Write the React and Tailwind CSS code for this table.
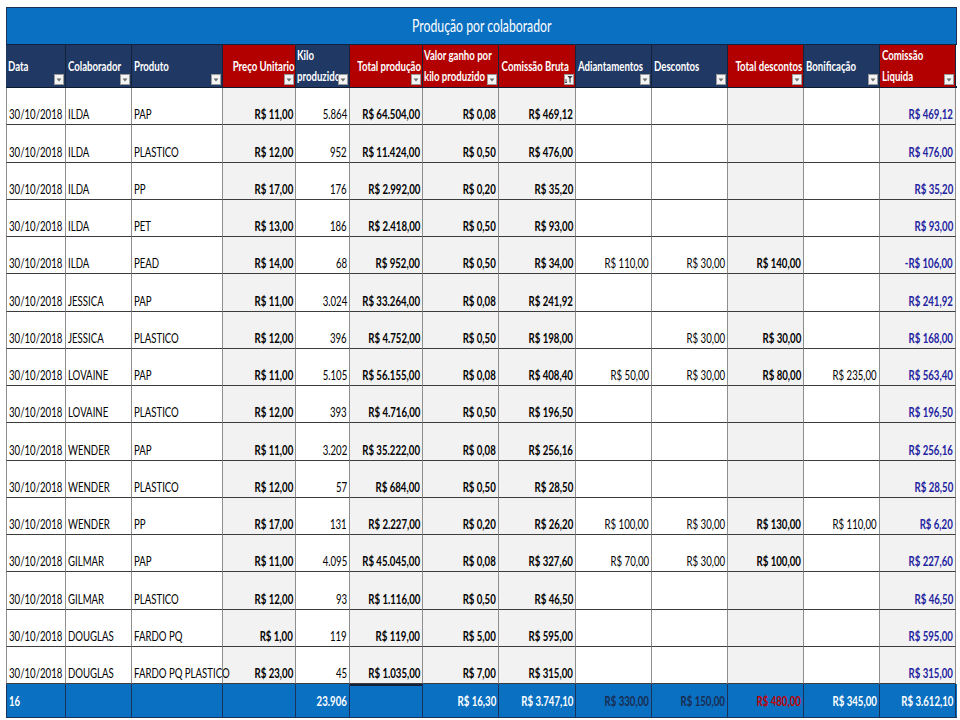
import React from "react";

const rows = [
  ["30/10/2018","ILDA","PAP","R$ 11,00","5.864","R$ 64.504,00","R$ 0,08","R$ 469,12","","","","","R$ 469,12"],
  ["30/10/2018","ILDA","PLASTICO","R$ 12,00","952","R$ 11.424,00","R$ 0,50","R$ 476,00","","","","","R$ 476,00"],
  ["30/10/2018","ILDA","PP","R$ 17,00","176","R$ 2.992,00","R$ 0,20","R$ 35,20","","","","","R$ 35,20"],
  ["30/10/2018","ILDA","PET","R$ 13,00","186","R$ 2.418,00","R$ 0,50","R$ 93,00","","","","","R$ 93,00"],
  ["30/10/2018","ILDA","PEAD","R$ 14,00","68","R$ 952,00","R$ 0,50","R$ 34,00","R$ 110,00","R$ 30,00","R$ 140,00","","-R$ 106,00"],
  ["30/10/2018","JESSICA","PAP","R$ 11,00","3.024","R$ 33.264,00","R$ 0,08","R$ 241,92","","","","","R$ 241,92"],
  ["30/10/2018","JESSICA","PLASTICO","R$ 12,00","396","R$ 4.752,00","R$ 0,50","R$ 198,00","","R$ 30,00","R$ 30,00","","R$ 168,00"],
  ["30/10/2018","LOVAINE","PAP","R$ 11,00","5.105","R$ 56.155,00","R$ 0,08","R$ 408,40","R$ 50,00","R$ 30,00","R$ 80,00","R$ 235,00","R$ 563,40"],
  ["30/10/2018","LOVAINE","PLASTICO","R$ 12,00","393","R$ 4.716,00","R$ 0,50","R$ 196,50","","","","","R$ 196,50"],
  ["30/10/2018","WENDER","PAP","R$ 11,00","3.202","R$ 35.222,00","R$ 0,08","R$ 256,16","","","","","R$ 256,16"],
  ["30/10/2018","WENDER","PLASTICO","R$ 12,00","57","R$ 684,00","R$ 0,50","R$ 28,50","","","","","R$ 28,50"],
  ["30/10/2018","WENDER","PP","R$ 17,00","131","R$ 2.227,00","R$ 0,20","R$ 26,20","R$ 100,00","R$ 30,00","R$ 130,00","R$ 110,00","R$ 6,20"],
  ["30/10/2018","GILMAR","PAP","R$ 11,00","4.095","R$ 45.045,00","R$ 0,08","R$ 327,60","R$ 70,00","R$ 30,00","R$ 100,00","","R$ 227,60"],
  ["30/10/2018","GILMAR","PLASTICO","R$ 12,00","93","R$ 1.116,00","R$ 0,50","R$ 46,50","","","","","R$ 46,50"],
  ["30/10/2018","DOUGLAS","FARDO PQ","R$ 1,00","119","R$ 119,00","R$ 5,00","R$ 595,00","","","","","R$ 595,00"],
  ["30/10/2018","DOUGLAS","FARDO PQ PLASTICO","R$ 23,00","45","R$ 1.035,00","R$ 7,00","R$ 315,00","","","","","R$ 315,00"],
];

const L = "justify-start pl-[2px]";
const R = "justify-end pr-[2px]";
const W = "bg-white";
const G = "bg-[#f2f2f2]";

const bodyCols = [
  { a: L, bg: W, t: "font-normal text-black", o: "origin-left" },
  { a: L, bg: W, t: "font-normal text-black", o: "origin-left" },
  { a: L, bg: W, t: "font-normal text-black", o: "origin-left" },
  { a: R, bg: G, t: "font-bold text-black", o: "origin-right" },
  { a: R, bg: W, t: "font-normal text-black", o: "origin-right" },
  { a: R, bg: G, t: "font-bold text-black", o: "origin-right" },
  { a: R, bg: G, t: "font-bold text-black", o: "origin-right" },
  { a: R, bg: G, t: "font-bold text-black", o: "origin-right" },
  { a: R, bg: W, t: "font-normal text-black", o: "origin-right" },
  { a: R, bg: W, t: "font-normal text-black", o: "origin-right" },
  { a: R, bg: G, t: "font-bold text-black", o: "origin-right" },
  { a: R, bg: W, t: "font-normal text-black", o: "origin-right" },
  { a: R, bg: G, t: "font-bold text-[#2323a0]", o: "origin-right" },
];

const NAVY = "bg-[#203864]";
const RED = "bg-[#b20000]";

const headers = [
  { lines: ["Data"], bg: NAVY, a: "justify-start pl-[2px]", o: "origin-left" },
  { lines: ["Colaborador"], bg: NAVY, a: "justify-start pl-[2px]", o: "origin-left" },
  { lines: ["Produto"], bg: NAVY, a: "justify-start pl-[2px]", o: "origin-left" },
  { lines: ["Preço Unitario"], bg: RED, a: "justify-end pr-[1px]", o: "origin-right" },
  { lines: ["Kilo", "produzido"], bg: NAVY, a: "justify-start pl-[1px]", o: "origin-left" },
  { lines: ["Total produção"], bg: RED, a: "justify-end pr-[1px]", o: "origin-right" },
  { lines: ["Valor ganho por", "kilo produzido"], bg: RED, a: "justify-start pl-[1px]", o: "origin-left" },
  { lines: ["Comissão Bruta"], bg: RED, a: "justify-end pr-[6px]", o: "origin-right", filtered: true },
  { lines: ["Adiantamentos"], bg: NAVY, a: "justify-start pl-[2px]", o: "origin-left" },
  { lines: ["Descontos"], bg: NAVY, a: "justify-start pl-[2px]", o: "origin-left" },
  { lines: ["Total descontos"], bg: RED, a: "justify-end pr-[1px]", o: "origin-right" },
  { lines: ["Bonificação"], bg: NAVY, a: "justify-start pl-[2px]", o: "origin-left" },
  { lines: ["Comissão", "Liquida"], bg: RED, a: "justify-start pl-[2px]", o: "origin-left" },
];

const footer = [
  { v: "16", a: L, o: "origin-left", c: "text-white" },
  { v: "", a: R, o: "origin-right", c: "text-white" },
  { v: "", a: R, o: "origin-right", c: "text-white" },
  { v: "", a: R, o: "origin-right", c: "text-white" },
  { v: "23.906", a: R, o: "origin-right", c: "text-white" },
  { v: "", a: R, o: "origin-right", c: "text-white", top: true },
  { v: "R$ 16,30", a: R, o: "origin-right", c: "text-white" },
  { v: "R$ 3.747,10", a: R, o: "origin-right", c: "text-white" },
  { v: "R$ 330,00", a: R, o: "origin-right", c: "text-[#1a2c50]" },
  { v: "R$ 150,00", a: R, o: "origin-right", c: "text-[#1a2c50]" },
  { v: "R$ 480,00", a: R, o: "origin-right", c: "text-[#c00000]" },
  { v: "R$ 345,00", a: R, o: "origin-right", c: "text-white" },
  { v: "R$ 3.612,10", a: R, o: "origin-right", c: "text-white" },
];

const GRID = "grid grid-cols-[60px_66px_91px_73px_54px_73px_76px_77px_76px_76px_76px_76px_76px]";

function FilterBtn({ filtered }) {
  return (
    <div className="absolute bottom-[2px] right-[1px] w-[10px] h-[11px] bg-[#f4f4f4] border border-[#9a9a9a] flex items-center justify-center">
      {filtered ? (
        <svg width="8" height="9" viewBox="0 0 8 9">
          <path d="M2.5 1 H7.5 L5.6 3.6 V8 L4.4 7.2 V3.6 Z" fill="#404040" />
          <path d="M1 4 V8 M0 6.8 L1 8 L2 6.8" stroke="#404040" strokeWidth="0.9" fill="none" />
        </svg>
      ) : (
        <svg width="6" height="4" viewBox="0 0 6 4">
          <path d="M0.5 0.5 H5.5 L3 3.5 Z" fill="#6a6a6a" />
        </svg>
      )}
    </div>
  );
}

export default function App() {
  return (
    <div className="min-h-screen w-[960px] h-[720px] bg-white pt-[7px] pl-[6px] font-[Lato,sans-serif] overflow-hidden">
      <div className="w-[951px]">
        {/* Title */}
        <div className="h-[37px] bg-[#0a70c2] border-t border-l border-r border-[#1b3157] flex items-center justify-center">
          <span className="inline-block whitespace-nowrap text-[17px] text-white scale-x-[0.72] origin-center leading-5">
            Produção por colaborador
          </span>
        </div>

        {/* Header */}
        <div className={`${GRID} h-[44px] border-t border-[#13223d] border-b-2 border-b-[#0e1a30]`}>
          {headers.map((h, i) => (
            <div
              key={i}
              className={`relative ${h.bg} border-r border-[#16223a] flex ${h.a} ${h.lines.length > 1 ? "flex-col justify-center items-start" : "items-center"}`}
            >
              {h.lines.map((ln, j) => (
                <span
                  key={j}
                  className={`inline-block whitespace-nowrap text-white font-bold text-[13px] leading-[21px] scale-x-[0.74] ${h.o}`}
                >
                  {ln}
                </span>
              ))}
              <FilterBtn filtered={h.filtered} />
            </div>
          ))}
        </div>

        {/* Body */}
        {rows.map((r, ri) => (
          <div key={ri} className={`${GRID} h-[37.25px]`}>
            {r.map((v, ci) => {
              const c = bodyCols[ci];
              return (
                <div
                  key={ci}
                  className={`${c.bg} flex items-end ${c.a} pb-[2px] border-b border-[#3c3c3c] border-r border-r-[#8e8e8e] ${ci === 0 ? "border-l border-l-[#8e8e8e]" : ""}`}
                >
                  <span className={`inline-block whitespace-nowrap text-[13px] leading-4 scale-x-[0.74] ${c.t} ${c.o}`}>
                    {v}
                  </span>
                </div>
              );
            })}
          </div>
        ))}

        {/* Footer */}
        <div className={`${GRID} h-[34px] bg-[#0a70c2] border-b border-[#1b3157]`}>
          {footer.map((f, i) => (
            <div
              key={i}
              className={`flex items-center ${f.a} border-r border-[#1b3157] ${i === 0 ? "border-l" : ""} ${f.top ? "border-t-2 border-t-[#13223d]" : ""}`}
            >
              <span className={`inline-block whitespace-nowrap text-[13px] font-bold leading-4 scale-x-[0.74] ${f.c} ${f.o}`}>
                {f.v}
              </span>
            </div>
          ))}
        </div>
      </div>
    </div>
  );
}
